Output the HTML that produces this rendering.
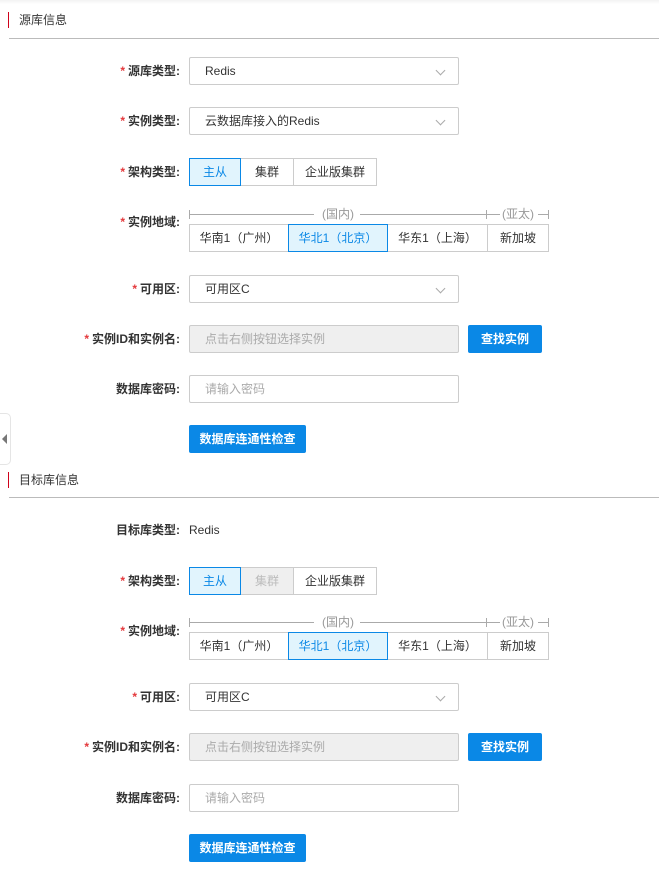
<!DOCTYPE html>
<html><head><meta charset="utf-8"><style>
*{box-sizing:border-box;margin:0;padding:0}
body{width:659px;height:880px;background:#fff;position:relative;overflow:hidden;font-family:"Liberation Sans","Noto Sans CJK SC",sans-serif;font-size:12px;color:#333}
.a{position:absolute}
.bar{position:absolute;left:8px;width:1px;height:16px;background:#d0021b}
.st{position:absolute;left:19px;font-size:12px;color:#333;line-height:16px}
.hl{position:absolute;left:9px;right:0;height:1px;background:#bbb}
.lb{position:absolute;right:479px;font-weight:bold;line-height:16px;white-space:nowrap;color:#333}
.lb i{font-style:normal;color:#e4393c;margin-right:3px;font-weight:bold}
.box{position:absolute;left:189px;width:270px;height:28px;border:1px solid #ccc;border-radius:2px;padding-left:15px;line-height:26px;color:#333}
.box.dis{background:#efefef;color:#aaa}
.ph{color:#aaa}
.arr{position:absolute;right:14px;top:9px;width:7px;height:7px;border-right:1px solid #aaa;border-bottom:1px solid #aaa;transform:rotate(45deg)}
.btn{position:absolute;background:#0a88e6;color:#fff;font-weight:bold;text-align:center;line-height:28px;height:28px;border-radius:2px}
.seg{position:absolute;height:28px;border:1px solid #ccc;text-align:center;line-height:26px;color:#333;background:#fff}
.seg.on{background:#e1f4fd;border-color:#0a88e6;color:#0a88e6;z-index:2}
.seg.off{background:#efefef;color:#bbb}
.gl{position:absolute;height:1px;background:#aaa}
.tk{position:absolute;width:1px;height:9px;background:#aaa}
.gt{position:absolute;color:#999;line-height:14px;font-size:12px}
</style></head><body>
<div class="a" style="left:0;top:0;width:659px;height:4px;background:linear-gradient(#f3f3f3,#fff)"></div>

<div class="bar" style="top:12px"></div><div class="st" style="top:12px">源库信息</div>
<div class="hl" style="top:38px"></div>

<div class="lb" style="top:63px"><i>*</i>源库类型:</div>
<div class="box" style="top:57px">Redis<span class="arr"></span></div>

<div class="lb" style="top:113px"><i>*</i>实例类型:</div>
<div class="box" style="top:107px">云数据库接入的Redis<span class="arr"></span></div>

<div class="lb" style="top:164px"><i>*</i>架构类型:</div>
<div class="seg on" style="left:189px;top:158px;width:52px">主从</div>
<div class="seg" style="left:240px;top:158px;width:54px">集群</div>
<div class="seg" style="left:293px;top:158px;width:84px">企业版集群</div>

<div class="lb" style="top:214px"><i>*</i>实例地域:</div>
<div class="tk" style="left:189px;top:210px"></div>
<div class="gl" style="left:189px;top:214px;width:125px"></div>
<div class="gt" style="left:322px;top:207px">(国内)</div>
<div class="gl" style="left:360px;top:214px;width:140px"></div>
<div class="tk" style="left:486px;top:210px"></div>
<div class="gt" style="left:502px;top:207px">(亚太)</div>
<div class="gl" style="left:538px;top:214px;width:10px"></div>
<div class="tk" style="left:548px;top:210px"></div>
<div class="seg" style="left:189px;top:224px;width:100px">华南1（广州）</div>
<div class="seg on" style="left:288px;top:224px;width:100px">华北1（北京）</div>
<div class="seg" style="left:387px;top:224px;width:101px">华东1（上海）</div>
<div class="seg" style="left:487px;top:224px;width:62px">新加坡</div>

<div class="lb" style="top:281px"><i>*</i>可用区:</div>
<div class="box" style="top:275px">可用区C<span class="arr"></span></div>

<div class="lb" style="top:331px"><i>*</i>实例ID和实例名:</div>
<div class="box dis" style="top:325px">点击右侧按钮选择实例</div>
<div class="btn" style="left:468px;top:325px;width:74px">查找实例</div>

<div class="lb" style="top:381px">数据库密码:</div>
<div class="box" style="top:375px"><span class="ph">请输入密码</span></div>

<div class="btn" style="left:189px;top:425px;width:117px">数据库连通性检查</div>

<div class="a" style="left:-5px;top:413px;width:16px;height:52px;border:1px solid #e5e5e5;border-radius:5px;background:#fff"></div>
<div class="a" style="left:2px;top:434px;width:0;height:0;border-top:5px solid transparent;border-bottom:5px solid transparent;border-right:5px solid #777"></div>

<div class="bar" style="top:472px"></div><div class="st" style="top:472px">目标库信息</div>
<div class="hl" style="top:497px"></div>

<div class="lb" style="top:522px">目标库类型:</div>
<div class="a" style="left:189px;top:522px;line-height:16px">Redis</div>

<div class="lb" style="top:573px"><i>*</i>架构类型:</div>
<div class="seg on" style="left:189px;top:567px;width:52px">主从</div>
<div class="seg off" style="left:240px;top:567px;width:54px">集群</div>
<div class="seg" style="left:293px;top:567px;width:84px">企业版集群</div>

<div class="lb" style="top:623px"><i>*</i>实例地域:</div>
<div class="tk" style="left:189px;top:618px"></div>
<div class="gl" style="left:189px;top:622px;width:125px"></div>
<div class="gt" style="left:322px;top:615px">(国内)</div>
<div class="gl" style="left:360px;top:622px;width:140px"></div>
<div class="tk" style="left:486px;top:618px"></div>
<div class="gt" style="left:502px;top:615px">(亚太)</div>
<div class="gl" style="left:538px;top:622px;width:10px"></div>
<div class="tk" style="left:548px;top:618px"></div>
<div class="seg" style="left:189px;top:632px;width:100px">华南1（广州）</div>
<div class="seg on" style="left:288px;top:632px;width:100px">华北1（北京）</div>
<div class="seg" style="left:387px;top:632px;width:101px">华东1（上海）</div>
<div class="seg" style="left:487px;top:632px;width:62px">新加坡</div>

<div class="lb" style="top:689px"><i>*</i>可用区:</div>
<div class="box" style="top:683px">可用区C<span class="arr"></span></div>

<div class="lb" style="top:739px"><i>*</i>实例ID和实例名:</div>
<div class="box dis" style="top:733px">点击右侧按钮选择实例</div>
<div class="btn" style="left:468px;top:733px;width:74px">查找实例</div>

<div class="lb" style="top:790px">数据库密码:</div>
<div class="box" style="top:784px"><span class="ph">请输入密码</span></div>

<div class="btn" style="left:189px;top:834px;width:117px">数据库连通性检查</div>
</body></html>
